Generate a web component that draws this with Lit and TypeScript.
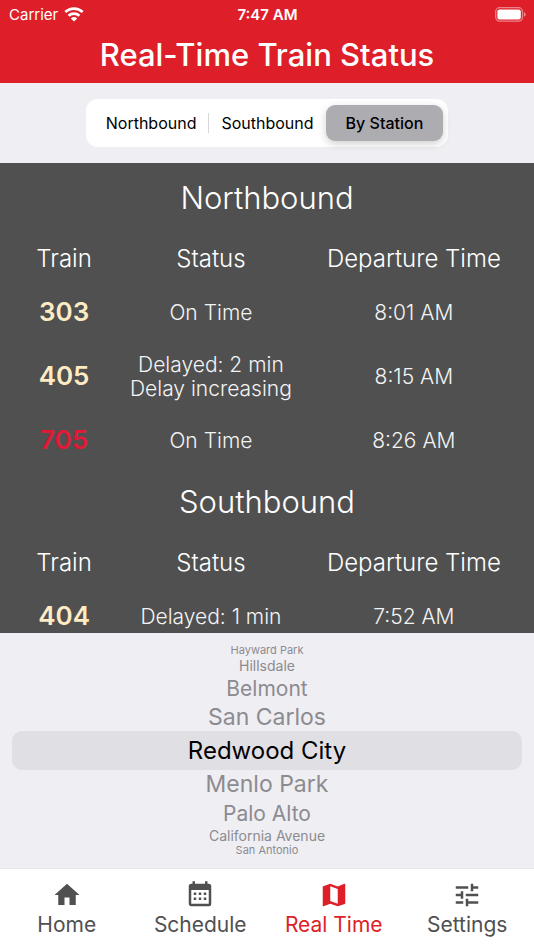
import { LitElement, html, css, svg } from "lit";
import { customElement, property, state } from "lit/decorators.js";
import { classMap } from "lit/directives/class-map.js";

interface Train {
  id: string;
  status: string[];
  time: string;
  express?: boolean;
}

const NORTHBOUND: Train[] = [
  { id: "303", status: ["On Time"], time: "8:01 AM" },
  { id: "405", status: ["Delayed: 2 min", "Delay increasing"], time: "8:15 AM" },
  { id: "705", status: ["On Time"], time: "8:26 AM", express: true },
];

const SOUTHBOUND: Train[] = [
  { id: "404", status: ["Delayed: 1 min"], time: "7:52 AM" },
];

const STATIONS = [
  "Hayward Park",
  "Hillsdale",
  "Belmont",
  "San Carlos",
  "Redwood City",
  "Menlo Park",
  "Palo Alto",
  "California Avenue",
  "San Antonio",
];

const TABS = [
  {
    label: "Home",
    path: "M10,20V14H14V20H19V12H22L12,3L2,12H5V20H10Z",
  },
  {
    label: "Schedule",
    path: "M9,10V12H7V10H9M13,10V12H11V10H13M17,10V12H15V10H17M19,3A2,2 0 0,1 21,5V19A2,2 0 0,1 19,21H5C3.89,21 3,20.1 3,19V5A2,2 0 0,1 5,3H6V1H8V3H16V1H18V3H19M19,19V8H5V19H19M9,14V16H7V14H9M13,14V16H11V14H13M17,14V16H15V14H17Z",
  },
  {
    label: "Real Time",
    path: "M20.5,3L20.34,3.03L15,5.1L9,3L3.36,4.9C3.15,4.97 3,5.15 3,5.38V20.5A.5,.5 0 0,0 3.5,21L3.66,20.97L9,18.9L15,21L20.64,19.1C20.85,19 21,18.85 21,18.62V3.5A.5,.5 0 0,0 20.5,3M15,19L9,16.89V5L15,7.11V19Z",
  },
  {
    label: "Settings",
    path: "M3,17V19H9V17H3M3,5V7H13V5H3M13,21V19H21V17H13V15H11V21H13M7,9V11H3V13H7V15H9V9H7M21,13V11H11V13H21M15,9H17V7H21V5H17V3H15V9Z",
  },
];

@customElement("status-bar")
export class StatusBar extends LitElement {
  static styles = css`
    :host {
      display: grid;
      grid-template-columns: 1fr auto 1fr;
      align-items: center;
      height: 28px;
      padding: 0 8px 0 9px;
      font-size: 15px;
      color: #fff;
    }
    .carrier {
      display: flex;
      align-items: center;
      gap: 6px;
    }
    .clock {
      font-weight: 600;
    }
    .battery {
      justify-self: end;
    }
    svg {
      display: block;
    }
  `;

  render() {
    return html`
      <span class="carrier">
        Carrier
        <svg width="20" height="15" viewBox="0 0 20 15" aria-label="Wi-Fi">
          <g fill="none" stroke="#fff" stroke-width="2.7">
            <path d="M1.3 5.1A12.6 12.6 0 0 1 18.7 5.1" />
            <path d="M4.6 8.7A7.9 7.9 0 0 1 15.4 8.7" />
          </g>
          <path d="M10 14.6L6.8 11.4A4.7 4.7 0 0 1 13.2 11.4Z" fill="#fff" />
        </svg>
      </span>
      <span class="clock">7:47 AM</span>
      <svg class="battery" width="31" height="15" viewBox="0 0 31 15" aria-label="Battery full">
        <rect x="0.7" y="0.7" width="26.8" height="13.4" rx="4" fill="none" stroke="#fff" stroke-opacity=".45" stroke-width="1.3" />
        <rect x="2.4" y="2.4" width="23.4" height="10" rx="2.2" fill="#fff" />
        <path d="M29 5.2Q30.6 5.7 30.6 7.4Q30.6 9.1 29 9.6Z" fill="#fff" fill-opacity=".5" />
      </svg>
    `;
  }
}

@customElement("train-board")
export class TrainBoard extends LitElement {
  @property() heading = "";
  @property({ attribute: false }) trains: Train[] = [];

  static styles = css`
    :host {
      display: block;
      color: #fff;
    }
    .heading {
      margin: 0;
      font-size: 31px;
      font-weight: 300;
      line-height: 66px;
      text-align: center;
    }
    .board {
      width: 100%;
      table-layout: fixed;
      border-collapse: collapse;
      text-align: center;
    }
    .col-train {
      width: 24%;
    }
    .col-status {
      width: 31%;
    }
    th,
    td {
      padding: 0;
      white-space: nowrap;
    }
    .label {
      height: 54px;
      font-size: 24px;
      font-weight: 300;
    }
    .number {
      padding-bottom: 3px;
      font-size: 26px;
      font-weight: 600;
      color: #fdebc4;
    }
    .express {
      color: #e31837;
    }
    .cell {
      height: 40px;
      padding: 8px 0;
      font-size: 21px;
      font-weight: 300;
      line-height: 24px;
      color: #f4f4f4;
    }
    .tall .cell {
      height: 56px;
    }
    .line {
      display: block;
    }
  `;

  render() {
    return html`
      <h2 class="heading">${this.heading}</h2>
      <table class="board" aria-label=${this.heading}>
        <thead>
          <tr>
            <th class="label col-train" scope="col">Train</th>
            <th class="label col-status" scope="col">Status</th>
            <th class="label" scope="col">Departure Time</th>
          </tr>
        </thead>
        <tbody>
          ${this.trains.map(
            (t) => html`
              <tr class=${classMap({ tall: t.status.length > 1 })}>
                <th class=${classMap({ number: true, express: !!t.express })} scope="row">${t.id}</th>
                <td class="cell">${t.status.map((s) => html`<span class="line">${s}</span>`)}</td>
                <td class="cell">${t.time}</td>
              </tr>
            `
          )}
        </tbody>
      </table>
    `;
  }
}

@customElement("station-picker")
export class StationPicker extends LitElement {
  @state() private selected = 4;

  static styles = css`
    :host {
      display: block;
      padding: 10px 12px;
      background: #efeef3;
    }
    .wheel {
      display: flex;
      flex-direction: column;
      margin: 0;
      padding: 0;
      border: 0;
      min-width: 0;
    }
    .station {
      display: flex;
      align-items: center;
      justify-content: center;
      position: relative;
      line-height: 1;
      color: #8c8b8f;
      white-space: nowrap;
      cursor: pointer;
    }
    .radio {
      position: absolute;
      inset: 0;
      width: 100%;
      height: 100%;
      margin: 0;
      opacity: 0;
      cursor: pointer;
    }
    .d0 {
      height: 39px;
      border-radius: 10px;
      background: #e0dfe4;
      font-size: 24px;
      color: #000;
    }
    .d1 {
      height: 28px;
      font-size: 23px;
    }
    .d2 {
      height: 30px;
      font-size: 21px;
    }
    .d3 {
      height: 15px;
      font-size: 14px;
    }
    .d4 {
      height: 15px;
      font-size: 11px;
    }
  `;

  render() {
    return html`
      <fieldset class="wheel" aria-label="Station">
        ${STATIONS.map((name, i) => {
          const distance = Math.min(4, Math.abs(i - this.selected));
          return html`
            <label class="station d${distance}">
              <input
                class="radio"
                type="radio"
                name="station"
                .checked=${i === this.selected}
                @change=${() => (this.selected = i)}
              />
              ${name}
            </label>
          `;
        })}
      </fieldset>
    `;
  }
}

@customElement("app-root")
export class AppRoot extends LitElement {
  @state() private view = "By Station";

  static styles = css`
    :host {
      display: flex;
      flex-direction: column;
      height: 100vh;
      font-family: Inter, "Liberation Sans", sans-serif;
      background: #efeef3;
    }
    .header {
      padding-bottom: 2px;
      background: #de1f29;
      color: #fff;
    }
    .title {
      margin: 0;
      font-size: 31px;
      font-weight: 500;
      line-height: 53px;
      text-align: center;
    }
    .filter {
      display: flex;
      justify-content: center;
      padding: 16px;
    }
    .segments {
      display: flex;
      align-items: center;
      padding: 6px 5px 6px 8px;
      border-radius: 12px;
      background: #fff;
    }
    .segment {
      height: 36px;
      padding: 0 12px;
      border: 0;
      border-radius: 9px;
      background: none;
      font: inherit;
      font-size: 16px;
      color: #000;
      cursor: pointer;
    }
    .segment.active {
      padding: 0 20px;
      background: #adacb1;
      font-weight: 500;
      box-shadow: 0 3px 8px #00000030;
    }
    .divider {
      width: 1px;
      height: 20px;
      background: #d8d8dc;
    }
    .boards {
      flex: 1;
      min-height: 0;
      padding-top: 2px;
      overflow: hidden auto;
      scrollbar-width: none;
      background: #505050;
    }
    .tabs {
      display: grid;
      grid-template-columns: repeat(4, 1fr);
      padding: 11px 0 10px;
      background: #fff;
      border-top: 1px solid #e8e8ec;
    }
    .tab {
      display: flex;
      flex-direction: column;
      align-items: center;
      font-size: 21px;
      line-height: 30px;
      color: #505050;
      text-decoration: none;
    }
    .tab.active {
      color: #de1f29;
    }
    .icon {
      display: block;
      width: 30px;
      height: 30px;
      fill: currentColor;
    }
  `;

  private segment(name: string) {
    const active = this.view === name;
    return html`
      <button
        class=${classMap({ segment: true, active })}
        aria-pressed=${active ? "true" : "false"}
        @click=${() => (this.view = name)}
      >${name}</button>
    `;
  }

  render() {
    return html`
      <header class="header">
        <status-bar></status-bar>
        <h1 class="title">Real-Time Train Status</h1>
      </header>
      <div class="filter">
        <div class="segments" role="group" aria-label="View">
          ${this.segment("Northbound")}
          <span class="divider"></span>
          ${this.segment("Southbound")}
          ${this.segment("By Station")}
        </div>
      </div>
      <main class="boards">
        <train-board heading="Northbound" .trains=${NORTHBOUND}></train-board>
        <train-board heading="Southbound" .trains=${SOUTHBOUND}></train-board>
      </main>
      <station-picker></station-picker>
      <nav class="tabs">
        ${TABS.map(
          (tab) => html`
            <a class=${classMap({ tab: true, active: tab.label === "Real Time" })} href="#">
              <svg class="icon" viewBox="0 0 24 24" aria-hidden="true">${svg`<path d=${tab.path} />`}</svg>
              ${tab.label}
            </a>
          `
        )}
      </nav>
    `;
  }
}
